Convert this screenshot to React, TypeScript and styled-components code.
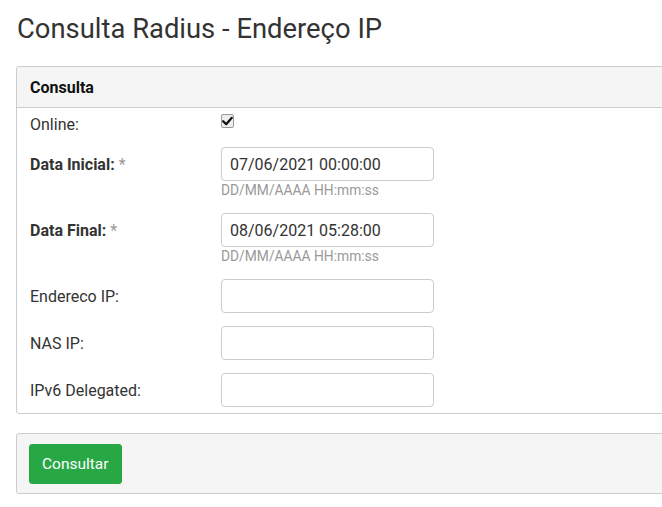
import React from "react";
import styled, { createGlobalStyle } from "styled-components";

const Global = createGlobalStyle`
  html, body { margin: 0; padding: 0; background: #fff; overflow: hidden; }
  body { font-family: Roboto, "Liberation Sans", Arial, sans-serif; color: #333; }
  * { box-sizing: border-box; }
`;

const Page = styled.div`
  width: 760px;
  padding: 15px 16px 0 16px;
`;

const Title = styled.h1`
  margin: 0 0 22px 1px;
  font-size: 27.4px;
  font-weight: 400;
  line-height: 29px;
  color: #333;
`;

const Panel = styled.section<{ $muted?: boolean }>`
  border: 1px solid #ccc;
  border-radius: 3px;
  background: ${(p) => (p.$muted ? "#f5f5f5" : "#fff")};
`;

const PanelHeader = styled.div`
  height: 41px;
  background: #f5f5f5;
  border-bottom: 1px solid #ccc;
  border-radius: 3px 3px 0 0;
  padding: 0 13px;
  display: flex;
  align-items: center;
  font-size: 16px;
  font-weight: 700;
  color: #111;
`;

const PanelBody = styled.div`
  padding: 6px 13px 6px 13px;
  display: flex;
  flex-direction: column;
  gap: 13px;
`;

const Row = styled.div`
  display: grid;
  grid-template-columns: 191px 213px;
  align-items: start;
`;

const Label = styled.label<{ $strong?: boolean; $h?: number }>`
  font-size: 16px;
  font-weight: ${(p) => (p.$strong ? 700 : 400)};
  color: #333;
  height: ${(p) => p.$h ?? 34}px;
  display: flex;
  align-items: center;
`;

const Req = styled.span`
  color: #999;
  font-weight: 400;
  margin-left: 4px;
`;

const Field = styled.div`
  display: flex;
  flex-direction: column;
`;

const Input = styled.input`
  width: 213px;
  height: 34px;
  border: 1px solid #ccc;
  border-radius: 4px;
  padding: 0 8px;
  font-family: Roboto, "Liberation Sans", Arial, sans-serif;
  font-size: 16px;
  color: #333;
  background: #fff;
  outline: none;
`;

const Help = styled.div`
  font-size: 13.8px;
  line-height: 19px;
  height: 19px;
  color: #999;
`;

const CheckCell = styled.div`
  height: 20px;
  display: flex;
  align-items: center;
`;

const CheckBox = styled.span`
  width: 13px;
  height: 14px;
  border: 1px solid #9a9a9a;
  border-radius: 2px;
  background: #ededed;
  display: inline-flex;
  align-items: center;
  justify-content: center;
  margin-top: -6px;
`;

const Actions = styled.div`
  padding: 10px 12px 9px 12px;
`;

const Button = styled.button`
  height: 40px;
  padding: 0 12px;
  border: 1px solid #28a745;
  border-radius: 3px;
  background: #28a745;
  color: #fff;
  font-family: Roboto, "Liberation Sans", Arial, sans-serif;
  font-size: 15.5px;
  cursor: pointer;
`;

const Spacer = styled.div`
  height: 19px;
`;

export default function App() {
  return (
    <>
      <Global />
      <Page>
        <Title>Consulta Radius - Endereço IP</Title>
        <Panel>
          <PanelHeader>Consulta</PanelHeader>
          <PanelBody>
            <Row>
              <Label $h={20}>Online:</Label>
              <CheckCell>
                <CheckBox>
                  <svg width="11" height="10" viewBox="0 0 11 10">
                    <path d="M1.2 5.2 L4.2 8.2 L9.8 1.8" fill="none" stroke="#111" strokeWidth="2.2" strokeLinecap="round" strokeLinejoin="round" />
                  </svg>
                </CheckBox>
              </CheckCell>
            </Row>
            <Row>
              <Label $strong>
                Data Inicial:<Req>*</Req>
              </Label>
              <Field>
                <Input defaultValue="07/06/2021 00:00:00" />
                <Help>DD/MM/AAAA HH:mm:ss</Help>
              </Field>
            </Row>
            <Row>
              <Label $strong>
                Data Final:<Req>*</Req>
              </Label>
              <Field>
                <Input defaultValue="08/06/2021 05:28:00" />
                <Help>DD/MM/AAAA HH:mm:ss</Help>
              </Field>
            </Row>
            <Row>
              <Label>Endereco IP:</Label>
              <Input />
            </Row>
            <Row>
              <Label>NAS IP:</Label>
              <Input />
            </Row>
            <Row>
              <Label>IPv6 Delegated:</Label>
              <Input />
            </Row>
          </PanelBody>
        </Panel>
        <Spacer />
        <Panel $muted>
          <Actions>
            <Button>Consultar</Button>
          </Actions>
        </Panel>
      </Page>
    </>
  );
}
